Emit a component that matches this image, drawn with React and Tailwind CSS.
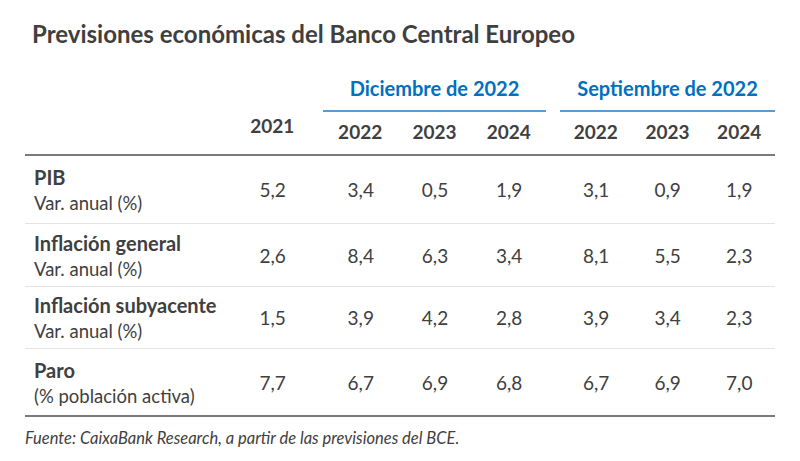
const groups = [
  { title: 'Diciembre de 2022', years: ['2022', '2023', '2024'], w: 'w-[223px]' },
  { title: 'Septiembre de 2022', years: ['2022', '2023', '2024'], w: 'w-[215px]' },
];

const rows = [
  { name: 'PIB', sub: 'Var. anual (%)', v2021: '5,2', dic: ['3,4', '0,5', '1,9'], sep: ['3,1', '0,9', '1,9'], pad: 'pt-[8px] pb-[7px]' },
  { name: 'Inflación general', sub: 'Var. anual (%)', v2021: '2,6', dic: ['8,4', '6,3', '3,4'], sep: ['8,1', '5,5', '2,3'], pad: 'pt-[6px] pb-[4px]' },
  { name: 'Inflación subyacente', sub: 'Var. anual (%)', v2021: '1,5', dic: ['3,9', '4,2', '2,8'], sep: ['3,9', '3,4', '2,3'], pad: 'pt-[5px] pb-[4px]' },
  { name: 'Paro', sub: '(% población activa)', v2021: '7,7', dic: ['6,7', '6,9', '6,8'], sep: ['6,7', '6,9', '7,0'], pad: 'pt-[8px] pb-[6px]' },
];

function ValueGroup({ values, w }) {
  return (
    <div className={`grid grid-cols-3 ${w}`}>
      {values.map((v, i) => (
        <div key={i} className="text-center">{v}</div>
      ))}
    </div>
  );
}

export default function App() {
  return (
    <div className="w-[800px] h-[461px] bg-white px-[25px] pt-[20px] text-[#404040] font-['Lato',sans-serif]">
      <h1 className="ml-[7px] h-[28px] leading-[28px] text-[24px] font-bold text-[#3f3f3f]">
        Previsiones económicas del Banco Central Europeo
      </h1>

      {/* header */}
      <div className="mt-[28px] flex border-b-2 border-[#7a7a7a] text-[19px] font-bold">
        <div className="w-[211px]" />
        <div className="w-[74px] flex items-end justify-center pb-[16px] leading-[24px]">2021</div>
        <div className="w-[14px]" />
        {groups.map((g, gi) => (
          <div key={gi} className="flex">
            <div className={`flex flex-col ${g.w}`}>
              <div className="border-b-2 border-[#5b9bd5] pb-[10px] text-center text-[20px] leading-[24px] text-[#0070c0]">
                {g.title}
              </div>
              <div className="grid grid-cols-3 pt-[8px] pb-[10px] leading-[24px]">
                {g.years.map((y) => (
                  <div key={y} className="text-center">{y}</div>
                ))}
              </div>
            </div>
            {gi === 0 && <div className="w-[14px]" />}
          </div>
        ))}
      </div>

      {/* body */}
      <div className="border-b-2 border-[#7a7a7a]">
        {rows.map((r, i) => (
          <div
            key={r.name}
            className={`flex items-center text-[19px] ${r.pad} ${i < rows.length - 1 ? 'border-b border-[#e4e4e4]' : ''}`}
          >
            <div className="w-[211px] pl-[9px] leading-[26px] whitespace-nowrap">
              <div className="font-bold text-[20px]">{r.name}</div>
              <div className="text-[18.5px]">{r.sub}</div>
            </div>
            <div className="w-[74px] text-center">{r.v2021}</div>
            <div className="w-[14px]" />
            <ValueGroup values={r.dic} w="w-[223px]" />
            <div className="w-[14px]" />
            <ValueGroup values={r.sep} w="w-[215px]" />
          </div>
        ))}
      </div>

      <p className="mt-[11px] text-[16.5px] italic leading-[20px] text-[#404040]">
        Fuente: CaixaBank Research, a partir de las previsiones del BCE.
      </p>
    </div>
  );
}
